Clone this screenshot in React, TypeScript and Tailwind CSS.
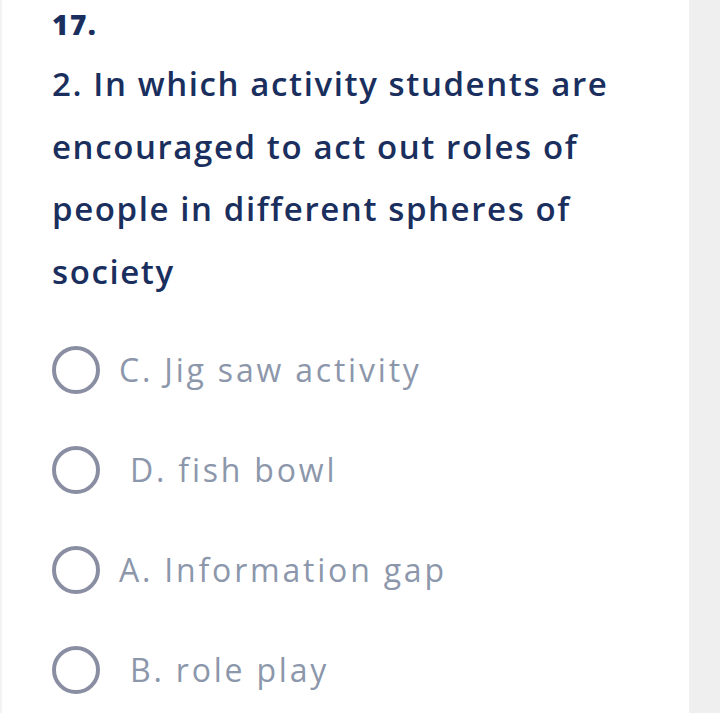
export default function App() {
  const options = [
    { label: "C. Jig saw activity", indent: false },
    { label: "D. fish bowl", indent: true },
    { label: "A. Information gap", indent: false },
    { label: "B. role play", indent: true },
  ];
  const lines = [
    "2. In which activity students are",
    "encouraged to act out roles of",
    "people in different spheres of",
    "society",
  ];
  return (
    <div className="flex h-[713px] w-[720px] overflow-hidden bg-white" style={{ fontFamily: "'Open Sans', Lato, sans-serif" }}>
      <div className="w-[2px] bg-[#f3f3f3]" />
      <div className="flex-1 pl-[50px] pt-[7px]">
        <div className="text-[28px] leading-[34px] font-extrabold tracking-[1.5px] text-[#1a2f5e]">17.</div>
        <div className="mt-[12px] text-[33px] leading-[62.5px] font-semibold tracking-[1.6px] text-[#1a2f5e]">
          {lines.map((l) => (
            <div key={l} className="whitespace-nowrap">{l}</div>
          ))}
        </div>
        <div className="mt-[17px] flex flex-col">
          {options.map((o) => (
            <div key={o.label} className="flex h-[100px] items-center">
              <div className="h-[48px] w-[48px] shrink-0 rounded-full border-[4px] border-[#8a8ea2]" />
              <div className={`${o.indent ? "ml-[30px]" : "ml-[19px]"} text-[32px] tracking-[2.8px] text-[#8c97ab]`}>{o.label}</div>
            </div>
          ))}
        </div>
      </div>
      <div className="w-[31px] bg-[#efefef]" />
    </div>
  );
}
